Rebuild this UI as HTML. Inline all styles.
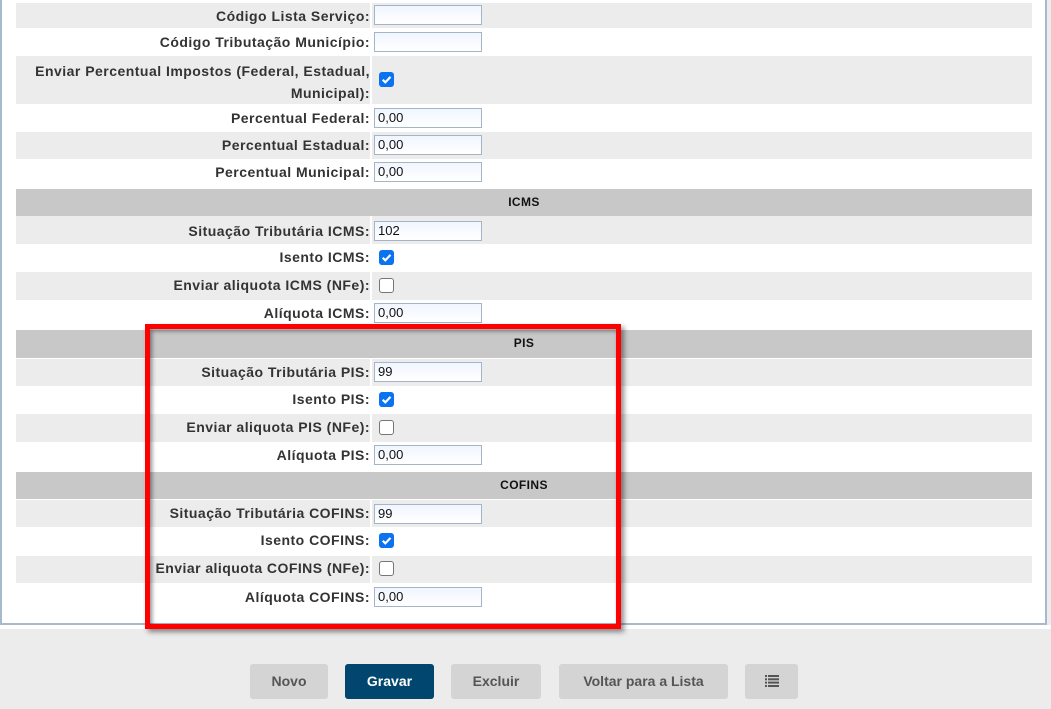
<!DOCTYPE html>
<html><head><meta charset="utf-8"><style>
*{margin:0;padding:0;box-sizing:border-box}
body{width:1051px;height:709px;background:#ececec;position:relative;overflow:hidden;font-family:"Liberation Sans",Arial,sans-serif}
.panel{position:absolute;left:0;top:-2px;width:1047px;height:627px;background:#fff;border:2px solid #a7b9cc;border-top:none}
.wgap{position:absolute;left:0;top:625px;width:1051px;height:4px;background:#fff}
.r{position:absolute;left:16px;width:1016px}
.g{background:#ececec}
.l{position:absolute;left:0;width:354px;text-align:right;font-weight:bold;font-size:14px;color:#333;line-height:20px;letter-spacing:.48px}
.sep{position:absolute;left:354px;top:0;bottom:0;width:2px;background:#fff}
.h{position:absolute;left:16px;width:1016px;background:#c8c8c8;text-align:center;font-weight:bold;font-size:12px;color:#111;line-height:26px;letter-spacing:.4px}
.in{position:absolute;left:358px;width:108px;height:20px;border:1px solid #a3b5c6;background:linear-gradient(#f0f5ff,#fff);font-size:13px;color:#111;padding-left:3px;line-height:18px}
.cb{position:absolute;left:363px;width:15px;height:15px;border-radius:3px;background:#0b72f0}
.cb svg{position:absolute;left:1px;top:1px}
.cu{position:absolute;left:363px;width:15px;height:15px;border-radius:3px;border:1.5px solid #767676;background:#fff}
.red{position:absolute;left:145px;top:324px;width:476px;height:305px;border:5px solid #f00;box-shadow:inset 2px 2px 4px rgba(0,0,0,.45),3px 3px 5px rgba(0,0,0,.45)}
.b{position:absolute;top:664px;height:35px;border-radius:3px;background:#d4d4d4;color:#555;font-weight:bold;font-size:14px;text-align:center;line-height:35px}
</style></head><body>
<div class="panel"></div>
<div class="wgap"></div>

<div class="r g" style="top:3px;height:25px"><div class="sep"></div><div class="l" style="top:3px">Código Lista Serviço:</div><div class="in" style="top:2px"></div></div>
<div class="r" style="top:28px;height:28px"><div class="sep"></div><div class="l" style="top:4px">Código Tributação Município:</div><div class="in" style="top:4px"></div></div>
<div class="r g" style="top:56px;height:48px"><div class="sep"></div><div class="l" style="top:4px;line-height:22px">Enviar Percentual Impostos (Federal, Estadual,<br>Municipal):</div><div class="cb" style="top:16px"><svg width="13" height="13" viewBox="0 0 12 12"><path d="M2.5 6.2l2.4 2.4 4.8-5" stroke="#fff" stroke-width="2" fill="none"/></svg></div></div>
<div class="r" style="top:104px;height:28px"><div class="sep"></div><div class="l" style="top:4px">Percentual Federal:</div><div class="in" style="top:4px">0,00</div></div>
<div class="r g" style="top:132px;height:27px"><div class="sep"></div><div class="l" style="top:3px">Percentual Estadual:</div><div class="in" style="top:3px">0,00</div></div>
<div class="r" style="top:159px;height:28px"><div class="sep"></div><div class="l" style="top:3px">Percentual Municipal:</div><div class="in" style="top:3px">0,00</div></div>

<div class="h" style="top:189px;height:27px">ICMS</div>
<div class="r g" style="top:216px;height:28px"><div class="sep"></div><div class="l" style="top:5px">Situação Tributária ICMS:</div><div class="in" style="top:5px">102</div></div>
<div class="r" style="top:244px;height:28px"><div class="sep"></div><div class="l" style="top:3px">Isento ICMS:</div><div class="cb" style="top:6px"><svg width="13" height="13" viewBox="0 0 12 12"><path d="M2.5 6.2l2.4 2.4 4.8-5" stroke="#fff" stroke-width="2" fill="none"/></svg></div></div>
<div class="r g" style="top:272px;height:28px"><div class="sep"></div><div class="l" style="top:3px">Enviar aliquota ICMS (NFe):</div><div class="cu" style="top:6px"></div></div>
<div class="r" style="top:300px;height:28px"><div class="sep"></div><div class="l" style="top:3px">Alíquota ICMS:</div><div class="in" style="top:3px">0,00</div></div>

<div class="h" style="top:330px;height:28px">PIS</div>
<div class="r g" style="top:359px;height:27px"><div class="sep"></div><div class="l" style="top:3px">Situação Tributária PIS:</div><div class="in" style="top:3px">99</div></div>
<div class="r" style="top:386px;height:28px"><div class="sep"></div><div class="l" style="top:3px">Isento PIS:</div><div class="cb" style="top:6px"><svg width="13" height="13" viewBox="0 0 12 12"><path d="M2.5 6.2l2.4 2.4 4.8-5" stroke="#fff" stroke-width="2" fill="none"/></svg></div></div>
<div class="r g" style="top:414px;height:28px"><div class="sep"></div><div class="l" style="top:3px">Enviar aliquota PIS (NFe):</div><div class="cu" style="top:6px"></div></div>
<div class="r" style="top:442px;height:28px"><div class="sep"></div><div class="l" style="top:3px">Alíquota PIS:</div><div class="in" style="top:3px">0,00</div></div>

<div class="h" style="top:472px;height:27px">COFINS</div>
<div class="r g" style="top:500px;height:27px"><div class="sep"></div><div class="l" style="top:3px">Situação Tributária COFINS:</div><div class="in" style="top:4px">99</div></div>
<div class="r" style="top:527px;height:29px"><div class="sep"></div><div class="l" style="top:3px">Isento COFINS:</div><div class="cb" style="top:6px"><svg width="13" height="13" viewBox="0 0 12 12"><path d="M2.5 6.2l2.4 2.4 4.8-5" stroke="#fff" stroke-width="2" fill="none"/></svg></div></div>
<div class="r g" style="top:556px;height:27px"><div class="sep"></div><div class="l" style="top:2px;letter-spacing:.45px">Enviar aliquota COFINS (NFe):</div><div class="cu" style="top:5px"></div></div>
<div class="r" style="top:583px;height:28px"><div class="sep"></div><div class="l" style="top:4px">Alíquota COFINS:</div><div class="in" style="top:4px">0,00</div></div>

<div class="red"></div>

<div class="b" style="left:250px;width:78px">Novo</div>
<div class="b" style="left:345px;width:89px;background:#00466e;color:#fff">Gravar</div>
<div class="b" style="left:451px;width:90px">Excluir</div>
<div class="b" style="left:559px;width:169px">Voltar para a Lista</div>
<div class="b" style="left:745px;width:53px"><svg width="14" height="12" viewBox="0 0 14 12" style="margin-top:11px"><g fill="#555"><rect x="0" y="0" width="2" height="2"/><rect x="3" y="0" width="11" height="2"/><rect x="0" y="3.3" width="2" height="2"/><rect x="3" y="3.3" width="11" height="2"/><rect x="0" y="6.6" width="2" height="2"/><rect x="3" y="6.6" width="11" height="2"/><rect x="0" y="10" width="2" height="2"/><rect x="3" y="10" width="11" height="2"/></g></svg></div>
</body></html>
